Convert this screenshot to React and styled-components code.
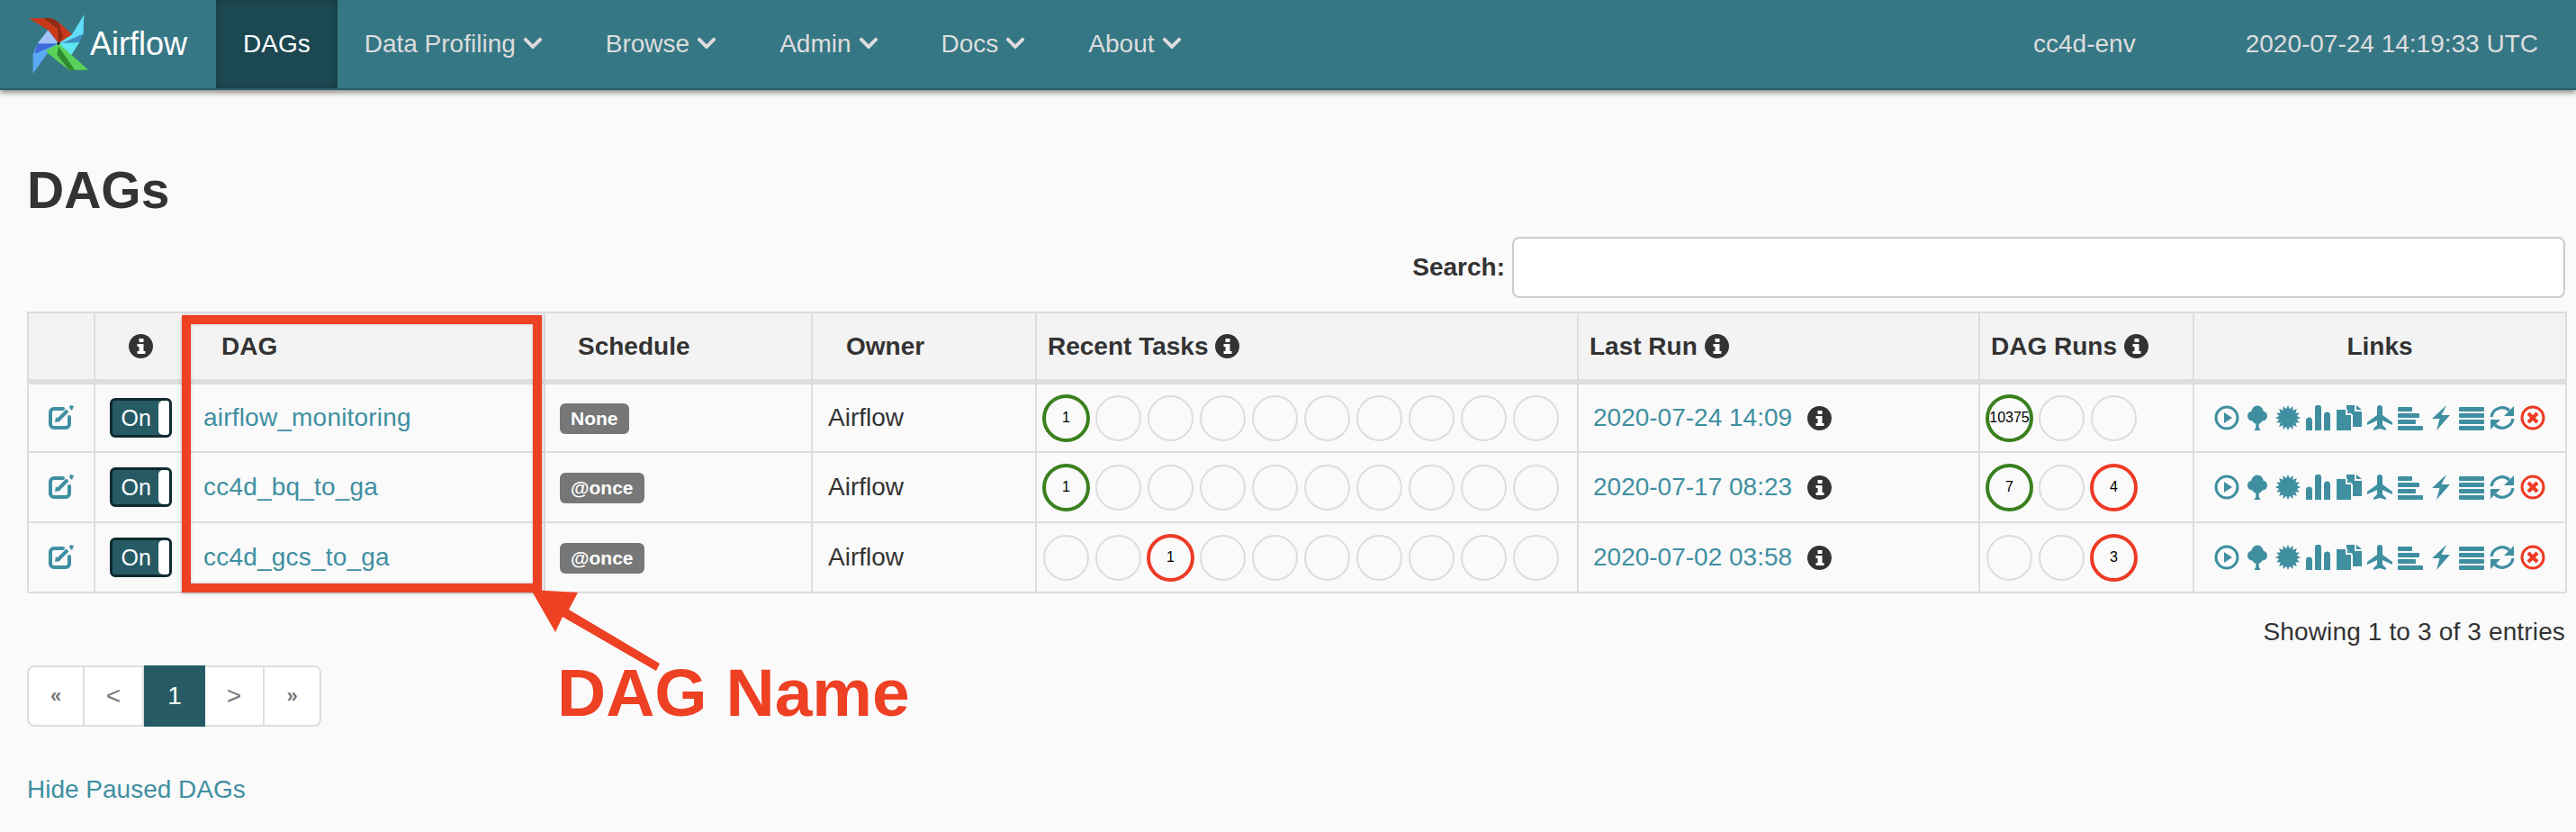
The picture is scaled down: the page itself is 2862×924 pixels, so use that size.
import React from "react";
import styled, { createGlobalStyle } from "styled-components";
import { FaChevronDown } from "react-icons/fa";

const GlobalStyle = createGlobalStyle`
  html, body {
    margin: 0;
    background: #fafafa;
    font-family: "Liberation Sans", Arial, sans-serif;
    font-size: 28px;
    color: #333;
  }
`;

const Page = styled.div`
  position: relative;
  width: 2862px;
  height: 924px;
  overflow: hidden;
`;

const Navbar = styled.nav`
  display: flex;
  align-items: stretch;
  height: 98px;
  padding-left: 30px;
  background: #367785;
  border-bottom: 2px solid #2a5c66;
  box-sizing: content-box;
  box-shadow: 0 3px 6px rgba(0, 0, 0, 0.45);
`;

const Brand = styled.div`
  display: flex;
  align-items: center;
  width: 210px;
  font-size: 36px;
  color: #fff;

  svg {
    flex: none;
    width: 70px;
    height: 70px;
  }
`;

const NavItem = styled.a`
  display: flex;
  align-items: center;
  gap: 7px;
  padding: 0 ${(p) => (p.$active ? 30 : 39)}px 0 30px;
  color: ${(p) => (p.$active ? "#fff" : "#ddd")};
  background: ${(p) => (p.$active ? "#1c4852" : "transparent")};
  box-shadow: ${(p) => (p.$active ? "inset 0 0 6px rgba(0,0,0,.25)" : "none")};
  svg {
    font-size: 24px;
    margin-top: -2px;
  }
`;

const NavRight = styled.div`
  display: flex;
  align-items: center;
  margin-left: auto;
  padding-right: 42px;
  gap: 122px;
  color: #ddd;
`;

const Content = styled.main`
  padding: 0 12px 0 30px;
`;

const Title = styled.h1`
  margin: 80px 0 0;
  font-size: 57px;
  line-height: 62px;
  font-weight: 700;
`;

const SearchRow = styled.div`
  display: flex;
  justify-content: flex-end;
  align-items: center;
  gap: 8px;
  margin-top: 21px;
  font-weight: 700;
`;

const SearchInput = styled.input`
  box-sizing: border-box;
  width: 1170px;
  height: 68px;
  background: #fff;
  border: 2px solid #ccc;
  border-radius: 8px;
`;

const Table = styled.table`
  width: 2820px;
  margin-top: 15px;
  table-layout: fixed;
  border-collapse: collapse;

  th, td {
    border: 2px solid #ddd;
    padding: 0 12px;
    text-align: left;
    box-sizing: border-box;
  }
  th {
    height: 77px;
    background: #f3f3f3;
    border-bottom-width: 6px;
    font-weight: 700;
  }
  td {
    height: 78px;
  }
`;

const HeadLabel = styled.span`
  display: inline-flex;
  align-items: center;
  gap: 8px;
  margin-left: ${(p) => p.$indent || 0}px;
`;

const CenterCell = styled.div`
  display: flex;
  justify-content: center;
`;

const Toggle = styled.span`
  display: flex;
  align-items: center;
  box-sizing: border-box;
  width: 69px;
  height: 44px;
  background: #265b65;
  border: 3px solid #102a30;
  border-radius: 6px;
  overflow: hidden;
  color: #fff;
  font-size: 25px;
  padding-left: 10px;
  position: relative;
  &::after {
    content: "";
    position: absolute;
    right: 0;
    top: 0;
    bottom: 0;
    width: 12px;
    background: #fff;
    border-radius: 5px 0 0 5px;
  }
`;

const TextLink = styled.a`
  color: #3f8fa1;
`;

const DagLink = styled(TextLink)`
  margin-left: 6px;
  letter-spacing: 0.2px;
`;

const Badge = styled.span`
  display: inline-block;
  padding: 0 12px;
  height: 34px;
  line-height: 34px;
  margin-left: 4px;
  font-size: 21px;
  font-weight: 700;
  color: #fff;
  background: #777;
  border-radius: 6px;
`;

const OwnerText = styled.span`
  margin-left: 5px;
`;

const Circles = styled.div`
  display: flex;
  align-items: center;
  gap: 7px;
  margin-left: -5px;
`;

const Circle = styled.span`
  display: flex;
  align-items: center;
  justify-content: center;
  box-sizing: border-box;
  flex: none;
  margin: 0 ${(p) => (p.$color ? -1 : 0)}px;
  width: ${(p) => (p.$color ? 53 : 51)}px;
  height: ${(p) => (p.$color ? 53 : 51)}px;
  border-radius: 50%;
  border: ${(p) => (p.$color ? `4px solid ${p.$color}` : "2px solid #ddd")};
  font-size: 16px;
  color: #000;
`;

const RunCell = styled.div`
  display: flex;
  align-items: center;
  gap: 17px;
  margin-left: 4px;
`;

const Icons = styled.div`
  display: flex;
  justify-content: center;
  gap: 6px;
  color: #3f8fa1;
  svg {
    flex: none;
    width: 28px;
    height: 28px;
    display: block;
  }
`;

const Entries = styled.div`
  margin-top: 27px;
  text-align: right;
  letter-spacing: 0.15px;
`;

const Pager = styled.div`
  display: flex;
  box-sizing: border-box;
  width: 327px;
  height: 68px;
  margin-top: 21px;
  background: #fff;
  border: 2px solid #ddd;
  border-radius: 8px;
`;

const PageCell = styled.span`
  display: flex;
  flex: none;
  align-items: center;
  justify-content: center;
  box-sizing: border-box;
  width: ${(p) => p.$w}px;
  font-size: ${(p) => (p.$double ? 22 : 28)}px;
  font-weight: ${(p) => (p.$double ? 700 : 400)};
  color: #777;
  border-right: ${(p) => (p.$last ? 0 : "2px solid #ddd")};
`;

const PageCurrent = styled(PageCell)`
  margin: -2px 0;
  color: #fff;
  background: #265b65;
  border-right: 0;
`;

const HideLink = styled(TextLink)`
  display: block;
  margin-top: 54px;
`;

const RedBox = styled.div`
  position: absolute;
  left: 202px;
  top: 350px;
  width: 400px;
  height: 308px;
  box-sizing: border-box;
  border: 10px solid #ee4023;
  box-shadow: 0 1px 4px rgba(0, 0, 0, 0.25), inset 0 0 3px rgba(0, 0, 0, 0.25);
`;

const ArrowSvg = styled.svg`
  position: absolute;
  left: 0;
  top: 0;
  pointer-events: none;
`;

const Callout = styled.div`
  position: absolute;
  left: 619px;
  top: 726px;
  font-size: 75px;
  line-height: 86px;
  font-weight: 700;
  color: #ee4023;
`;

const InfoIcon = () => (
  <svg width="27" height="27" viewBox="0 0 27 27" style={{ flex: "none" }}>
    <circle cx="13.5" cy="13.5" r="13.5" fill="#333" />
    <path fill="#fff" d="M11.5 5h5v4h-5zM9.5 11h7v8h2v3h-9v-3h2v-5h-2z" />
  </svg>
);

const EditIcon = () => (
  <svg width="30" height="28" viewBox="0 0 30 28" fill="none" stroke="#3f8fa1">
    <path strokeWidth="4" strokeLinecap="round" d="M17 4H7a4 4 0 0 0-4 4v13a4 4 0 0 0 4 4h13a4 4 0 0 0 4-4v-8" />
    <path strokeWidth="4" d="M11 17l11-11" />
    <path fill="#3f8fa1" strokeWidth="0" d="M9 13l5 5-6 1zM25 0l4 1-2 5-3-3z" />
  </svg>
);

const burst = Array.from({ length: 32 }, (_, i) => {
  const r = i % 2 ? 10 : 14;
  const a = (i * Math.PI) / 16;
  return `${14 + r * Math.sin(a)},${14 - r * Math.cos(a)}`;
}).join(" ");

const PlayIcon = () => (
  <svg viewBox="0 0 28 28">
    <circle cx="14" cy="14" r="12" fill="none" stroke="currentColor" strokeWidth="3" />
    <path fill="currentColor" d="M11 8l9 6-9 6z" />
  </svg>
);
const TreeIcon = () => (
  <svg viewBox="0 0 28 28" fill="currentColor">
    <circle cx="14" cy="7" r="6.5" />
    <circle cx="8.5" cy="12" r="5.5" />
    <circle cx="19.5" cy="12" r="5.5" />
    <circle cx="14" cy="15" r="6" />
    <path d="M12.3 18h3.4v7l2 3h-7.4l2-3z" />
  </svg>
);
const CertIcon = () => (
  <svg viewBox="0 0 28 28">
    <polygon fill="currentColor" points={burst} />
  </svg>
);
const SignalIcon = () => (
  <svg viewBox="0 0 28 28" fill="currentColor">
    <path d="M0 17a3 3 0 0 1 7 0v11H0zM10 3a3.5 3.5 0 0 1 7 0v25h-7zM20 11a3.5 3.5 0 0 1 7 0v17h-7z" />
  </svg>
);
const DuplicateIcon = () => (
  <svg viewBox="0 0 28 28" fill="currentColor">
    <path d="M0 5h10v6h6v17H0zM12 5l4 4h-4z" />
    <path d="M11 0h9v7h8v17H18V11l-7-7zM22 0l6 5h-6z" />
  </svg>
);
const PlaneIcon = () => (
  <svg viewBox="0 0 28 28" fill="currentColor">
    <path d="M11 3a3 3 0 0 1 6 0v8l11 8v3l-11-5v5l4 4v2l-7-2-7 2v-2l4-4v-5L0 22v-3l11-8z" />
  </svg>
);
const AlignIcon = () => (
  <svg viewBox="0 0 28 28" fill="currentColor">
    <rect x="0" y="2" width="16" height="5" rx="1" />
    <rect x="0" y="9" width="24" height="5" rx="1" />
    <rect x="0" y="16" width="20" height="5" rx="1" />
    <rect x="0" y="23" width="28" height="5" rx="1" />
  </svg>
);
const FlashIcon = () => (
  <svg viewBox="0 0 28 28" fill="currentColor">
    <path d="M20 0L14.5 11H24L9 28l3.500-13H4z" />
  </svg>
);
const JustifyIcon = () => (
  <svg viewBox="0 0 28 28" fill="currentColor">
    <rect x="0" y="2" width="28" height="5" rx="1" />
    <rect x="0" y="9" width="28" height="5" rx="1" />
    <rect x="0" y="16" width="28" height="5" rx="1" />
    <rect x="0" y="23" width="28" height="5" rx="1" />
  </svg>
);
const RefreshIcon = () => (
  <svg viewBox="0 0 28 28">
    <path fill="none" stroke="currentColor" strokeWidth="3.2" d="M2 13A12 12 0 0 1 22 6" />
    <path fill="none" stroke="currentColor" strokeWidth="3.2" d="M26 15A12 12 0 0 1 6 22" />
    <path fill="currentColor" d="M27 1v11H16zM1 27V16h11z" />
  </svg>
);
const RemoveIcon = () => (
  <svg viewBox="0 0 28 28">
    <circle cx="14" cy="14" r="12" fill="none" stroke="#ee3a24" strokeWidth="3" />
    <path stroke="#ee3a24" strokeWidth="4" d="M9 9l10 10M19 9L9 19" />
  </svg>
);

const Logo = () => (
  <svg viewBox="5 0 70 70">
    <g transform="translate(-5 -9) scale(.3333)">
      <path fill="#c8391b" d="M36 46h74q20 4 70 54l-15 22-30 8-35-45z" />
      <path fill="#8c2a14" d="M85 46h25q12 3 26 15l14 49-15 20-2-50z" />
      <path fill="#5fdcf7" d="M220 34l-2 64-68 30-15 2 45-30z" />
      <path fill="#3f8fc4" d="M218 98l-68 30 55-1z" />
      <path fill="#5fe8f2" d="M135 130l70-4-35 54-25-25z" />
      <path fill="#5ad25a" d="M135 130l100 88h-65l-80-63 20-20z" />
      <path fill="#2f8a2f" d="M135 140l55 78h-20l-40-50z" />
      <path fill="#5aa9f5" d="M65 130h70l-45 25 10 5-50 70v-65z" />
      <path fill="#3d6ad8" d="M65 130h70l-80 35z" />
      <path fill="#a3c2fa" d="M100 85l35 45H65z" />
      <circle cx="135" cy="130" r="4" fill="#000" />
    </g>
  </svg>
);

const LINK_ICONS = [PlayIcon, TreeIcon, CertIcon, SignalIcon, DuplicateIcon, PlaneIcon, AlignIcon, FlashIcon, JustifyIcon, RefreshIcon, RemoveIcon];

const GREEN = "#3a801f";
const RED = "#ee3a24";

const dags = [
  {
    name: "airflow_monitoring",
    schedule: "None",
    run: "2020-07-24 14:09",
    tasks: { 0: [GREEN, 1] },
    runs: [[GREEN, 10375], [], []],
  },
  {
    name: "cc4d_bq_to_ga",
    schedule: "@once",
    run: "2020-07-17 08:23",
    tasks: { 0: [GREEN, 1] },
    runs: [[GREEN, 7], [], [RED, 4]],
  },
  {
    name: "cc4d_gcs_to_ga",
    schedule: "@once",
    run: "2020-07-02 03:58",
    tasks: { 2: [RED, 1] },
    runs: [[], [], [RED, 3]],
  },
];

const NAV = ["Data Profiling", "Browse", "Admin", "Docs", "About"];
const COLS = [74, 102, 398, 297, 249, 602, 446, 238, 414];

const App = () => (
  <Page>
    <GlobalStyle />
    <Navbar>
      <Brand>
        <Logo />
        Airflow
      </Brand>
      <NavItem $active>DAGs</NavItem>
      {NAV.map((item) => (
        <NavItem key={item}>
          {item}
          <FaChevronDown />
        </NavItem>
      ))}
      <NavRight>
        <span>cc4d-env</span>
        <span>2020-07-24 14:19:33 UTC</span>
      </NavRight>
    </Navbar>

    <Content>
      <Title>DAGs</Title>
      <SearchRow>
        Search:
        <SearchInput />
      </SearchRow>
      <Table>
        <colgroup>
          {COLS.map((w, i) => (
            <col key={i} width={w} />
          ))}
        </colgroup>
        <thead>
          <tr>
            <th />
            <th>
              <CenterCell>
                <InfoIcon />
              </CenterCell>
            </th>
            <th>
              <HeadLabel $indent={26}>DAG</HeadLabel>
            </th>
            <th>
              <HeadLabel $indent={24}>Schedule</HeadLabel>
            </th>
            <th>
              <HeadLabel $indent={25}>Owner</HeadLabel>
            </th>
            <th>
              <HeadLabel>
                Recent Tasks <InfoIcon />
              </HeadLabel>
            </th>
            <th>
              <HeadLabel>
                Last Run <InfoIcon />
              </HeadLabel>
            </th>
            <th>
              <HeadLabel>
                DAG Runs <InfoIcon />
              </HeadLabel>
            </th>
            <th>
              <CenterCell>Links</CenterCell>
            </th>
          </tr>
        </thead>
        <tbody>
          {dags.map((dag) => (
            <tr key={dag.name}>
              <td>
                <CenterCell>
                  <EditIcon />
                </CenterCell>
              </td>
              <td>
                <CenterCell>
                  <Toggle>On</Toggle>
                </CenterCell>
              </td>
              <td>
                <DagLink>{dag.name}</DagLink>
              </td>
              <td>
                <Badge>{dag.schedule}</Badge>
              </td>
              <td>
                <OwnerText>Airflow</OwnerText>
              </td>
              <td>
                <Circles>
                  {Array.from({ length: 10 }, (_, i) => (
                    <Circle key={i} $color={dag.tasks[i]?.[0]}>
                      {dag.tasks[i]?.[1]}
                    </Circle>
                  ))}
                </Circles>
              </td>
              <td>
                <RunCell>
                  <TextLink>{dag.run}</TextLink>
                  <InfoIcon />
                </RunCell>
              </td>
              <td>
                <Circles>
                  {dag.runs.map(([color, count], i) => (
                    <Circle key={i} $color={color}>
                      {count}
                    </Circle>
                  ))}
                </Circles>
              </td>
              <td>
                <Icons>
                  {LINK_ICONS.map((Icon, i) => (
                    <Icon key={i} />
                  ))}
                </Icons>
              </td>
            </tr>
          ))}
        </tbody>
      </Table>
      <Entries>Showing 1 to 3 of 3 entries</Entries>
      <Pager>
        <PageCell $w={62} $double>«</PageCell>
        <PageCell $w={66}>&lt;</PageCell>
        <PageCurrent $w={68}>1</PageCurrent>
        <PageCell $w={66}>&gt;</PageCell>
        <PageCell $w={61} $double $last>»</PageCell>
      </Pager>
      <HideLink>Hide Paused DAGs</HideLink>
    </Content>

    <RedBox />
    <ArrowSvg width="1100" height="800" viewBox="0 0 1100 800">
      <polygon
        fill="#ee4023"
        points="590,655 642,658 632,677 733,737 729,745 625,685 617,702"
      />
    </ArrowSvg>
    <Callout>DAG Name</Callout>
  </Page>
);

export default App;
